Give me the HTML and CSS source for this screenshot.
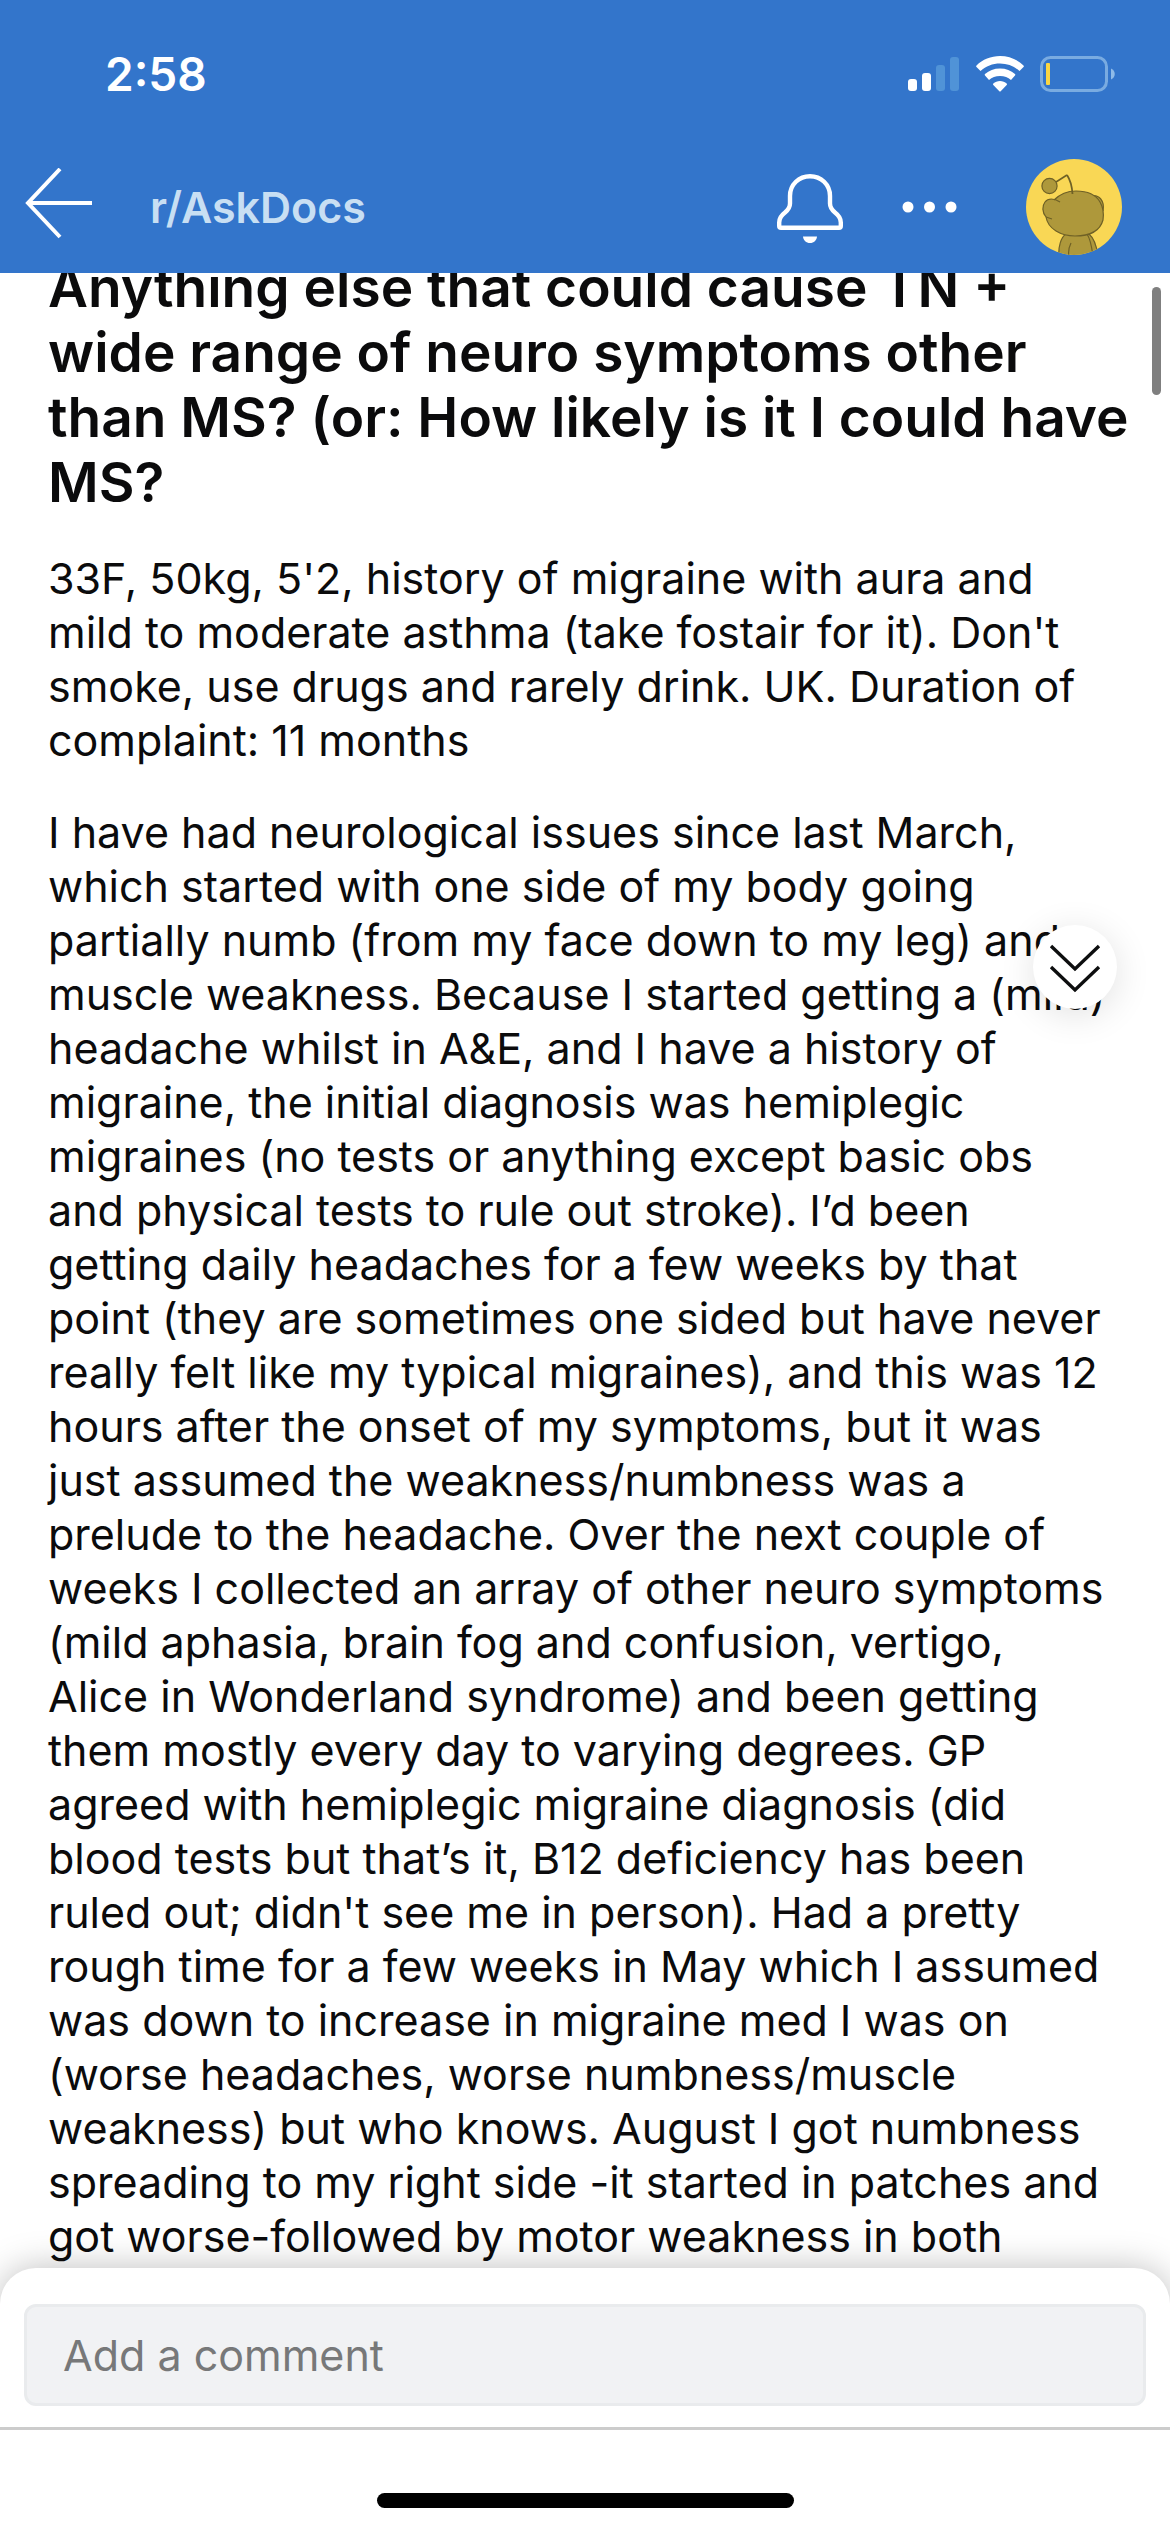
FILE: index.html
```html
<!DOCTYPE html>
<html lang="en">
<head>
<meta charset="utf-8">
<meta name="viewport" content="width=device-width, initial-scale=1">
<title>r/AskDocs</title>
<link rel="stylesheet" href="styles.css">
</head>
<body>
<div class="app">
  <header class="header">
    <div class="status">
      <time class="clock">2:58</time>
      <div class="indicators">
        <svg width="52" height="36" viewBox="0 0 52 36" aria-label="Signal">
          <g fill="#fff"><rect x="0" y="23" width="9" height="12" rx="3"/><rect x="14" y="17" width="9" height="18" rx="3"/></g>
          <g fill="#5093d7"><rect x="28" y="9" width="9" height="26" rx="3"/><rect x="42" y="1" width="9" height="34" rx="3"/></g>
        </svg>
        <svg width="48" height="36" viewBox="0 0 48 36" fill="#fff" aria-label="Wi-Fi">
          <path d="M24 0C33 0 41.500 3.500 47.500 9.500C48 10 48 10.500 47.500 11L43.500 15C38 10 31.500 7.500 24 7.500S10 10 4.500 15L.5 11C0 10.500 0 10 .5 9.500C6.500 3.500 15 0 24 0Z"/>
          <path d="M24 12.500C30 12.500 35 14.500 39 18C39.500 18.500 39.500 19 39 19.500L35 24C32 21.500 28.500 20 24 20S16 21.500 13 24L9 19.500C8.500 19 8.500 18.500 9 18C13 14.500 18 12.500 24 12.500Z"/>
          <path d="M24 25C26.500 25 29 26 30.700 27.500C31.200 28 31.200 28.500 30.700 29L24.700 35.200C24.300 35.600 23.700 35.600 23.300 35.200L17.300 29C16.800 28.500 16.800 28 17.300 27.500C19 26 21.500 25 24 25Z"/>
        </svg>
        <svg width="75" height="36" viewBox="0 0 75 36" aria-label="Low battery">
          <rect x="1.500" y="1.500" width="65" height="33" rx="9" fill="none" stroke="#79abe1" stroke-width="3"/>
          <rect x="6" y="7" width="4" height="22" rx="1" fill="#fad643"/>
          <path d="M71 12.500C76 14.500 76 21.500 71 23.500Z" fill="#8fbbe8"/>
        </svg>
      </div>
    </div>
    <nav class="nav">
      <button class="icon-button" type="button" aria-label="Back">
        <svg width="68" height="78" viewBox="0 3 68 78" fill="none" stroke="#fff" stroke-width="4"><path d="M36 4L4 38L36 72M4 38H68"/></svg>
      </button>
      <a class="community" href="#">r/AskDocs</a>
      <button class="icon-button" type="button" aria-label="Notifications">
        <svg width="68" height="72" viewBox="0 0 68 72" fill="none" stroke="#fff" stroke-width="4.400">
          <path d="M34 5.200C23 5.200 14 13.500 14 25V32.500C14 37 12 39 9 41.500C5 44.500 3.200 47 3.200 51.500V55C3.200 56.200 4 56.800 5 56.800H63C64 56.800 64.800 56.200 64.800 55V51.500C64.800 47 63 44.500 59 41.500C56 39 54 37 54 32.500V25C54 13.500 45 5.200 34 5.200Z"/>
          <path d="M27 65.500H41C40.500 69.500 38 72 34 72S27.500 69.500 27 65.500Z" fill="#fff" stroke="none"/>
        </svg>
      </button>
      <button class="icon-button more" type="button" aria-label="More options">
        <svg width="56" height="12" viewBox="0 0 56 12" fill="#fff"><circle cx="6" cy="6" r="5.500"/><circle cx="27.500" cy="6" r="5.500"/><circle cx="49" cy="6" r="5.500"/></svg>
      </button>
      <button class="icon-button avatar" type="button" aria-label="Profile">
        <svg width="96" height="96" viewBox="0 0 96 96">
          <clipPath id="disc"><circle cx="48" cy="48" r="48"/></clipPath>
          <circle cx="48" cy="48" r="48" fill="#f9d755"/>
          <g clip-path="url(#disc)" fill="#ae983b" stroke="#6f6126" stroke-width="1.200">
            <path d="M33 98C32 88 35 78 40 75L63 75C69 80 71 89 72 98Z"/>
            <path d="M61 75C65 81 66 89 67 98M43 98C42 93 43 88 45 84" fill="none"/>
            <path d="M65 37C73 35 79 42 77 52"/>
            <path d="M28 41C34 35 41 32 50 32C62 32 70 36 74 43C77 48 78 54 77 61C74 72 63 77 49 77C35 77 22 70 20 58C16 53 16 47 19 43C22 39 28 39 34 43"/>
            <path d="M20 58L26 60" fill="none"/>
            <path d="M30 23L41 16" fill="none" stroke-width="1.600"/>
            <path d="M41 16C45 22 46 27 46.500 35" fill="none" stroke-width="1.800"/>
            <circle cx="23.500" cy="27" r="7.600"/>
          </g>
        </svg>
      </button>
    </nav>
  </header>

  <main class="post">
    <h1 class="title">Anything else that could cause TN +<br>wide range of neuro symptoms other<br>than MS? (or: How likely is it I could have<br>MS?</h1>
    <p class="text">33F, 50kg, 5'2, history of migraine with aura and<br>mild to moderate asthma (take fostair for it). Don't<br>smoke, use drugs and rarely drink. UK. Duration of<br>complaint: 11 months</p>
    <p class="text">I have had neurological issues since last March,<br>which started with one side of my body going<br>partially numb (from my face down to my leg) and<br>muscle weakness. Because I started getting a (mild)<br>headache whilst in A&amp;E, and I have a history of<br>migraine, the initial diagnosis was hemiplegic<br>migraines (no tests or anything except basic obs<br>and physical tests to rule out stroke). I’d been<br>getting daily headaches for a few weeks by that<br>point (they are sometimes one sided but have never<br>really felt like my typical migraines), and this was 12<br>hours after the onset of my symptoms, but it was<br>just assumed the weakness/numbness was a<br>prelude to the headache. Over the next couple of<br>weeks I collected an array of other neuro symptoms<br>(mild aphasia, brain fog and confusion, vertigo,<br>Alice in Wonderland syndrome) and been getting<br>them mostly every day to varying degrees. GP<br>agreed with hemiplegic migraine diagnosis (did<br>blood tests but that’s it, B12 deficiency has been<br>ruled out; didn't see me in person). Had a pretty<br>rough time for a few weeks in May which I assumed<br>was down to increase in migraine med I was on<br>(worse headaches, worse numbness/muscle<br>weakness) but who knows. August I got numbness<br>spreading to my right side -it started in patches and<br>got worse-followed by motor weakness in both</p>
    <div class="scroll-thumb"></div>
    <button class="jump" type="button" aria-label="Next comment">
      <svg width="52" height="48" viewBox="0 -2 52 48" overflow="visible" fill="none" stroke="#0d0e0f" stroke-width="3.400"><path d="M2 1L26 24L50 1M2 22L26 45L50 22"/></svg>
    </button>
  </main>

  <footer class="footer">
    <div class="composer">
      <input class="comment" type="text" placeholder="Add a comment" aria-label="Add a comment">
    </div>
    <div class="home-bar"></div>
  </footer>
</div>
</body>
</html>
```

FILE: styles.css
```css
* { box-sizing: border-box; }

body {
  margin: 0;
  background: #fff;
  color: #0b0b0c;
  font-family: Inter, "Liberation Sans", sans-serif;
}

.app {
  display: flex;
  flex-direction: column;
  height: 100vh;
}

.header {
  background: #3375cb;
  color: #fff;
}

.status {
  display: flex;
  align-items: center;
  justify-content: space-between;
  height: 141px;
  padding: 7px 55px 0 105px;
}

.clock {
  font-size: 46px;
  font-weight: 600;
}

.indicators {
  display: flex;
  gap: 16px;
}

.nav {
  display: flex;
  align-items: center;
  height: 132px;
  padding: 0 48px 0 24px;
}

.icon-button {
  display: flex;
  padding: 0;
  border: 0;
  background: none;
}

.community {
  flex: 1;
  padding-left: 58px;
  color: #c8dff3;
  font-size: 43px;
  font-weight: 600;
  text-decoration: none;
}

.more { margin: 0 68px 0 58px; }

.post {
  position: relative;
  flex: 1;
  min-height: 0;
  overflow: hidden;
  padding: 0 48px;
  white-space: nowrap;
}

/* The post is scrolled, so the title starts under the header. */
.title {
  margin: -18px 0 36px;
  font-size: 55px;
  font-weight: 600;
  line-height: 65px;
}

.text {
  margin: 0 0 38px;
  font-size: 43px;
  line-height: 54px;
}

.scroll-thumb {
  position: absolute;
  top: 14px;
  right: 9px;
  width: 9px;
  height: 108px;
  border-radius: 5px;
  background: #7f7f7f;
}

.jump {
  position: absolute;
  top: 652px;
  right: 53px;
  display: grid;
  place-items: center;
  width: 84px;
  height: 84px;
  padding: 0;
  border: 0;
  border-radius: 50%;
  background: #fff;
  box-shadow: 0 6px 36px rgba(0, 0, 0, 0.12);
}

.footer {
  position: relative;
  padding-bottom: 24px;
  border-radius: 36px 36px 0 0;
  background: #fff;
  box-shadow: 0 0 36px rgba(0, 0, 0, 0.26);
}

.composer {
  padding: 36px 24px 21px;
  border-bottom: 3px solid #ccc;
}

.comment {
  display: block;
  width: 100%;
  height: 102px;
  padding: 0 36px;
  border: 3px solid #e9ebed;
  border-radius: 12px;
  background: #f1f2f4;
  color: #0b0b0c;
  font: 43px Inter, "Liberation Sans", sans-serif;
}

.comment::placeholder { color: #777879; }

.home-bar {
  width: 417px;
  height: 15px;
  margin: 63px auto 0;
  border-radius: 8px;
  background: #000;
}
```
